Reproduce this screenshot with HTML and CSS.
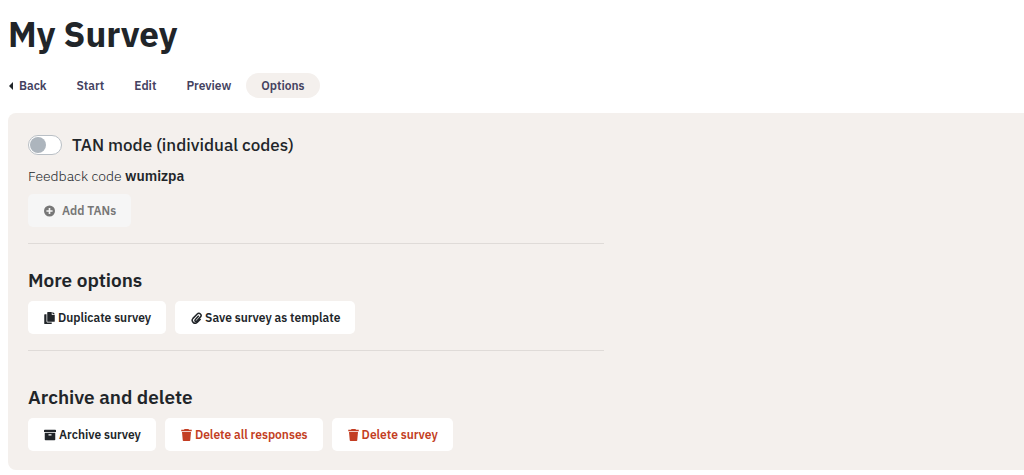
FILE: index.html
```html
<!DOCTYPE html>
<html lang="en">
  <head>
    <meta charset="UTF-8" />
    <meta name="viewport" content="width=device-width, initial-scale=1.0" />
    <title>My Survey</title>
    <link rel="stylesheet" href="styles.css">
  </head>
  <body>
    <header>
      <h1>My Survey</h1>
      <nav class="tabs">
        <a href="#" class="back">
          <svg class="caret" viewBox="0 0 4 8"><path d="M4 0v8L0 4z" /></svg>
          Back
        </a>
        <a href="#">Start</a>
        <a href="#">Edit</a>
        <a href="#">Preview</a>
        <a href="#" class="active">Options</a>
      </nav>
    </header>

    <main class="panel">
      <section class="tan">
        <div class="switch-row">
          <input type="checkbox" role="switch" id="tanMode" class="switch" />
          <label for="tanMode">TAN mode (individual codes)</label>
        </div>
        <p>Feedback code <strong>wumizpa</strong></p>
        <button type="button" class="btn btn-add" disabled>
          <svg class="icon" viewBox="0 0 16 16">
            <path fill-rule="evenodd" d="M8 0a8 8 0 1 0 0 16A8 8 0 0 0 8 0zM6.800 3.500h2.400v3.300h3.300v2.400H9.200v3.300H6.800V9.200H3.500V6.800h3.300z" />
          </svg>
          Add TANs
        </button>
      </section>

      <section class="more">
        <h2>More options</h2>
        <div class="btn-row">
          <button type="button" class="btn">
            <svg class="icon" viewBox="0 0 448 512">
              <path d="M320 448v40c0 13.255-10.745 24-24 24H24c-13.255 0-24-10.745-24-24V120c0-13.255 10.745-24 24-24h72v296c0 30.879 25.121 56 56 56h168zm0-344V0H152c-13.255 0-24 10.745-24 24v368c0 13.255 10.745 24 24 24h272c13.255 0 24-10.745 24-24V128H344c-13.200 0-24-10.800-24-24zm120.971-31.029L375.029 7.029A24 24 0 0 0 358.059 0H352v96h96v-6.059a24 24 0 0 0-7.029-16.970z" />
            </svg>
            Duplicate survey
          </button>
          <button type="button" class="btn">
            <svg class="icon clip" viewBox="1 0 14 16">
              <path d="M11 5 6.300 10.300a1.300 1.300 0 0 0 1.900 1.900l5-5.400a2.900 2.900 0 0 0-4.200-4.200L3.300 8.500a3.900 3.900 0 0 0 5.500 5.500l4.700-4.800" />
            </svg>
            Save survey as template
          </button>
        </div>
      </section>

      <section class="archive">
        <h2>Archive and delete</h2>
        <div class="btn-row">
          <button type="button" class="btn">
            <svg class="icon icon-wide" viewBox="0 0 16 16">
              <path fill-rule="evenodd" d="M1 1h14a1 1 0 0 1 1 1v2H0V2a1 1 0 0 1 1-1zM1 5h14v9a1 1 0 0 1-1 1H2a1 1 0 0 1-1-1zm5 2v1.500h4V7z" />
            </svg>
            Archive survey
          </button>
          <button type="button" class="btn btn-danger">
            <svg class="icon" viewBox="1 0 14 16">
              <path d="M5.500 0h5l1 1H15v2H1V1h3.500zM2 4h12l-1 11a1 1 0 0 1-1 1H4a1 1 0 0 1-1-1z" />
            </svg>
            Delete all responses
          </button>
          <button type="button" class="btn btn-danger">
            <svg class="icon" viewBox="1 0 14 16">
              <path d="M5.500 0h5l1 1H15v2H1V1h3.500zM2 4h12l-1 11a1 1 0 0 1-1 1H4a1 1 0 0 1-1-1z" />
            </svg>
            Delete survey
          </button>
        </div>
      </section>
    </main>
  </body>
</html>
```
FILE: styles.css
```css
* {
  box-sizing: border-box;
}

body {
  margin: 0;
  padding: 12px 0 5px 8px;
  background: #fff;
  color: #212529;
  font-family: "IBM Plex Sans", Roboto, sans-serif;
  font-size: 14px;
  line-height: 20px;
}

h1,
h2,
p {
  margin: 0;
}

h1 {
  font-size: 35px;
  font-weight: 700;
  line-height: 44px;
}

h2 {
  font-size: 19px;
  font-weight: 600;
  line-height: 24px;
}

/* Navigation */
.tabs {
  display: flex;
  align-items: center;
  margin: 17px 0 15px;
}

.tabs a {
  padding: 3px 15px 2px;
  border-radius: 13px;
  color: #44425f;
  font-size: 12px;
  font-weight: 600;
  line-height: 20px;
  text-decoration: none;
}

.tabs .back {
  display: flex;
  align-items: center;
  gap: 6px;
  padding-left: 1px;
}

.tabs .active {
  background: #f4f0ed;
}

.caret {
  width: 4px;
  height: 8px;
  fill: #212529;
}

/* Options panel */
.panel {
  padding: 20px 20px 19px;
  border-radius: 8px 0 0 8px;
  background: #f4f0ed;
}

section {
  width: 59%;
}

.tan,
.more {
  padding-bottom: 16px;
  border-bottom: 1px solid #dfdbd8;
}

.more {
  padding-top: 24px;
}

.archive {
  padding-top: 34px;
}

.switch-row {
  display: flex;
  align-items: center;
  gap: 10px;
}

.switch-row label {
  font-size: 17px;
  font-weight: 500;
  line-height: 24px;
}

.switch {
  appearance: none;
  width: 34px;
  height: 20px;
  margin: 0;
  padding: 1px;
  border: 1px solid #b9bfc5;
  border-radius: 10px;
  background: #fff;
}

.switch::before {
  content: "";
  display: block;
  width: 16px;
  height: 16px;
  border-radius: 50%;
  background: #adb5bd;
}

.switch:checked::before {
  margin-left: auto;
}

.tan p {
  margin: 9px 0 8px;
  font-weight: 300;
}

.tan strong {
  font-weight: 600;
}

.btn-row {
  display: flex;
  gap: 9px;
  margin-top: 9px;
}

.btn {
  display: flex;
  align-items: center;
  gap: 3px;
  padding: 6px 15px 6px 16px;
  border: 0;
  border-radius: 5px;
  background: #fff;
  color: #212529;
  font-family: inherit;
  font-size: 12px;
  font-weight: 600;
  line-height: 21px;
  white-space: nowrap;
}

.btn-add {
  gap: 7px;
  background: #f6f6f6;
  color: #777;
}

.btn-danger {
  color: #c33d22;
}

.icon {
  width: 11px;
  height: 12px;
  fill: currentColor;
}

.icon-wide {
  width: 12px;
}

.clip {
  fill: none;
  stroke: currentColor;
  stroke-width: 2;
}
```
